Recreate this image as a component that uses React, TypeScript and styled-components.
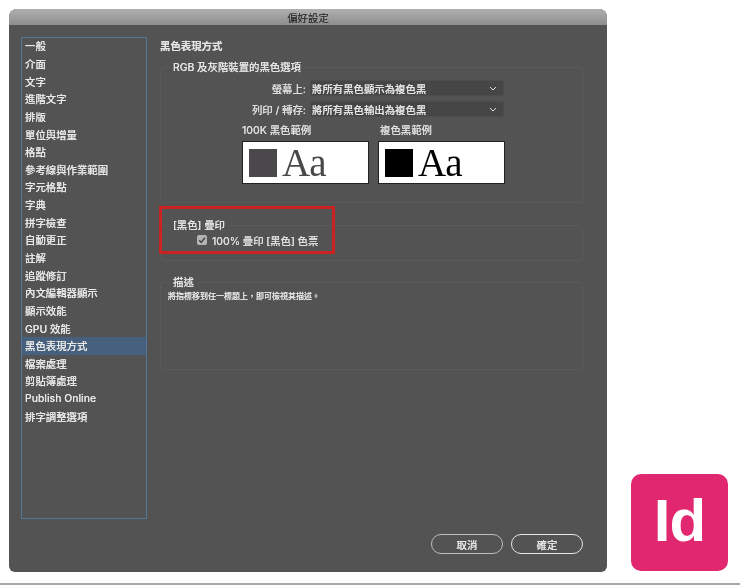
import React from "react";
import styled, { createGlobalStyle } from "styled-components";

const FONT = `Inter, "Liberation Sans", "Noto Sans CJK TC", sans-serif`;

const categories = [
  "一般",
  "介面",
  "文字",
  "進階文字",
  "排版",
  "單位與增量",
  "格點",
  "參考線與作業範圍",
  "字元格點",
  "字典",
  "拼字檢查",
  "自動更正",
  "註解",
  "追蹤修訂",
  "內文編輯器顯示",
  "顯示效能",
  "GPU 效能",
  "黑色表現方式",
  "檔案處理",
  "剪貼簿處理",
  "Publish Online",
  "排字調整選項",
];

const App = () => {
  return (
    <Page>
      <GlobalStyle />
      <Stage>
        <Dialog>
          <TitleBar>偏好設定</TitleBar>
          <DialogBody>
            <Columns>
              <Sidebar>
                {categories.map((c) => (
                  <SidebarItem key={c} $active={c === "黑色表現方式"}>
                    {c}
                  </SidebarItem>
                ))}
              </Sidebar>
              <Main>
                <Heading>黑色表現方式</Heading>
                <Group $height={143}>
                  <Legend>RGB 及灰階裝置的黑色選項</Legend>
                  <SelectRow>
                    <SelectLabel>螢幕上:</SelectLabel>
                    <Select>
                      將所有黑色顯示為複色黑
                      <Chevron />
                    </Select>
                  </SelectRow>
                  <SelectRow>
                    <SelectLabel>列印 / 轉存:</SelectLabel>
                    <Select>
                      將所有黑色輸出為複色黑
                      <Chevron />
                    </Select>
                  </SelectRow>
                  <Samples>
                    <Sample>
                      <SampleLabel>100K 黑色範例</SampleLabel>
                      <SampleBox $color="#4a484a">
                        <Swatch />
                        <span>Aa</span>
                      </SampleBox>
                    </Sample>
                    <Sample>
                      <SampleLabel $indent={2}>複色黑範例</SampleLabel>
                      <SampleBox $color="#000">
                        <Swatch />
                        <span>Aa</span>
                      </SampleBox>
                    </Sample>
                  </Samples>
                </Group>
                <Group $height={43} $gap={15}>
                  <Legend>[黑色] 疊印</Legend>
                  <CheckRow>
                    <CheckBox>
                      <svg viewBox="0 0 10 10" width="10" height="10">
                        <path d="M2.2 5.2 4.2 7.4 7.9 2.8" fill="none" stroke="#444" strokeWidth="1.5" />
                      </svg>
                    </CheckBox>
                    100% 疊印 [黑色] 色票
                  </CheckRow>
                  <Highlight />
                </Group>
                <Group $height={95} $gap={14}>
                  <Legend>描述</Legend>
                  <Description>將指標移到任一標題上，即可檢視其描述。</Description>
                </Group>
              </Main>
            </Columns>
            <Footer>
              <PillButton>取消</PillButton>
              <PillButton $primary>確定</PillButton>
            </Footer>
          </DialogBody>
        </Dialog>
        <Logo>Id</Logo>
      </Stage>
      <BottomRule />
    </Page>
  );
};

const Chevron = () => (
  <ChevronIcon viewBox="0 0 8 5" width="8" height="5">
    <path d="M1 1 4 4 7 1" fill="none" stroke="#ddd" strokeWidth="1" />
  </ChevronIcon>
);

const GlobalStyle = createGlobalStyle`
  html, body {
    margin: 0;
    padding: 0;
    background: #fff;
  }
  body {
    font-family: ${FONT};
  }
`;

const Page = styled.div`
  width: 740px;
  height: 585px;
  overflow: hidden;
  display: flex;
  flex-direction: column;
  background: #fff;
  filter: blur(0.3px);
`;

const Stage = styled.div`
  height: 583px;
  box-sizing: border-box;
  padding: 9px 12px 11px 9px;
  display: flex;
  justify-content: space-between;
`;

const BottomRule = styled.div`
  height: 2px;
  background: #a8a8a8;
`;

const Dialog = styled.div`
  width: 598px;
  display: flex;
  flex-direction: column;
  border-radius: 8px 8px 6px 6px;
  overflow: hidden;
  background: #535353;
  text-shadow: 0 0 0.6px rgba(235, 235, 235, 0.75);
`;

const TitleBar = styled.div`
  height: 16px;
  flex: none;
  display: flex;
  align-items: center;
  justify-content: center;
  font-size: 10.4px;
  color: #2e2e2e;
  text-shadow: 0 0 0.6px rgba(40, 40, 40, 0.6);
  background: linear-gradient(#b0b0b0, #8e8e8e);
`;

const DialogBody = styled.div`
  flex: 1;
  padding: 12px 24px 18px 12px;
  display: flex;
  flex-direction: column;
`;

const Columns = styled.div`
  height: 482px;
  display: flex;
  gap: 13px;
`;

const Sidebar = styled.div`
  width: 126px;
  box-sizing: border-box;
  padding: 0 1px;
  box-shadow: inset 0 0 0 1px #527699;
  flex: none;
`;

const SidebarItem = styled.div<{ $active?: boolean }>`
  height: 17.65px;
  display: flex;
  align-items: center;
  padding-left: 3px;
  font-size: 10.4px;
  font-weight: 500;
  color: #e8e8e8;
  white-space: nowrap;
  background: ${(p) => (p.$active ? "#46607d" : "transparent")};
`;

const Main = styled.div`
  width: 430px;
  display: flex;
  flex-direction: column;
`;

const Heading = styled.div`
  height: 17px;
  display: flex;
  align-items: center;
  font-size: 10.4px;
  font-weight: 700;
  color: #e4e4e4;
  margin-bottom: 6px;
`;

const Group = styled.fieldset<{ $height: number; $gap?: number }>`
  position: relative;
  height: ${(p) => p.$height}px;
  box-sizing: border-box;
  margin: ${(p) => p.$gap ?? 0}px 0 0;
  padding: 0;
  border: 1px solid #5a5a5a;
  border-radius: 2px;
  min-width: 0;
`;

const Legend = styled.legend`
  margin-left: 9px;
  padding: 0 3px;
  height: 14px;
  line-height: 16px;
  font-size: 10.4px;
  font-weight: 500;
  color: #e4e4e4;
`;

const SelectRow = styled.div`
  display: grid;
  grid-template-columns: 145px 194px;
  column-gap: 4px;
  align-items: center;
  height: 16px;
  margin-top: 5px;
  &:first-of-type {
    margin-top: 6px;
  }
`;

const SelectLabel = styled.div`
  text-align: right;
  font-size: 10.4px;
  font-weight: 500;
  color: #dcdcdc;
`;

const Select = styled.div`
  height: 16px;
  box-sizing: border-box;
  display: flex;
  align-items: center;
  justify-content: space-between;
  padding: 0 3px 0 1px;
  font-size: 10.4px;
  font-weight: 500;
  color: #e4e4e4;
  background: #464646;
  border: 1px solid #4d4d4d;
  border-radius: 2px;
`;

const ChevronIcon = styled.svg`
  flex: none;
  margin-right: 3px;
`;

const Samples = styled.div`
  display: flex;
  gap: 9px;
  margin: 6px 0 0 81px;
`;

const Sample = styled.div`
  width: 127px;
`;

const SampleLabel = styled.div<{ $indent?: number }>`
  height: 14px;
  line-height: 16px;
  margin-bottom: 4px;
  padding-left: ${(p) => p.$indent ?? 0}px;
  font-size: 10.4px;
  font-weight: 500;
  color: #dcdcdc;
`;

const SampleBox = styled.div<{ $color: string }>`
  height: 43px;
  box-sizing: border-box;
  display: flex;
  align-items: center;
  gap: 5px;
  padding-left: 6px;
  background: #fff;
  border: 1px solid #222;
  color: ${(p) => p.$color};
  text-shadow: none;
  font-family: "Liberation Serif", serif;
  font-size: 39px;
  letter-spacing: -1px;
  line-height: 1;
  overflow: hidden;
`;

const Swatch = styled.div`
  width: 28px;
  height: 28px;
  flex: none;
  background: currentColor;
`;

const CheckRow = styled.div`
  display: flex;
  align-items: center;
  gap: 5px;
  height: 14px;
  margin: 1px 0 0 36px;
  font-size: 10.4px;
  font-weight: 500;
  color: #dedede;
`;

const CheckBox = styled.div`
  width: 10px;
  height: 10px;
  flex: none;
  display: flex;
  border-radius: 2px;
  background: #b4b4b4;
`;

const Highlight = styled.div`
  position: absolute;
  left: -2px;
  top: -26px;
  width: 170px;
  height: 42px;
  border: 3px solid #cb2224;
  border-radius: 1px;
  pointer-events: none;
`;

const Description = styled.div`
  padding: 2px 0 0 7px;
  font-size: 8px;
  line-height: 10px;
  font-weight: 500;
  color: #e8e8e8;
`;

const Footer = styled.div`
  margin-top: 15px;
  height: 20px;
  display: flex;
  justify-content: flex-end;
  gap: 8px;
`;

const PillButton = styled.div<{ $primary?: boolean }>`
  width: 72px;
  box-sizing: border-box;
  display: flex;
  align-items: center;
  justify-content: center;
  border-radius: 10px;
  border: ${(p) => (p.$primary ? "1.5px solid #e6e6e6" : "1px solid #bdbdbd")};
  font-size: 10.4px;
  font-weight: 500;
  color: #e4e4e4;
`;

const Logo = styled.div`
  align-self: flex-end;
  width: 97px;
  height: 97px;
  box-sizing: border-box;
  padding-bottom: 4px;
  margin-bottom: 1px;
  display: flex;
  align-items: center;
  justify-content: center;
  border-radius: 10px;
  background: #e0276f;
  color: #fff;
  font-family: "Liberation Sans", sans-serif;
  font-weight: 700;
  font-size: 60px;
  letter-spacing: -1px;
`;

export default App;
